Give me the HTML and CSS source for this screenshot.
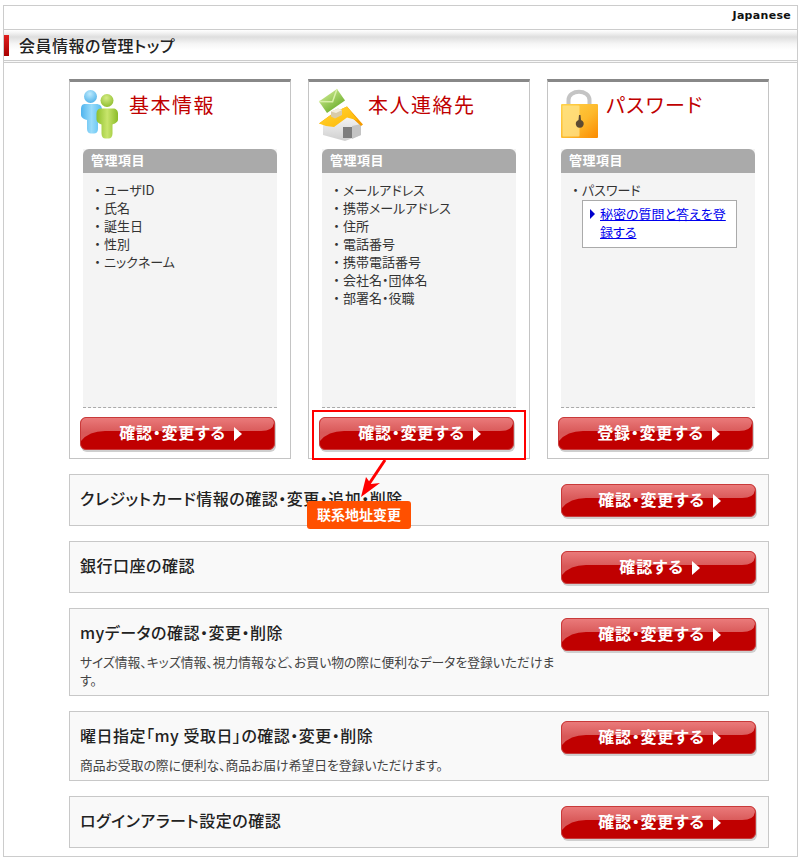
FILE: index.html
```html
<!DOCTYPE html>
<html lang="ja">
<head>
    <meta charset="UTF-8">
    <meta name="viewport" content="width=device-width, initial-scale=1.0">
    <title>会員情報の管理トップ</title>
    <link rel="stylesheet" href="styles.css">
</head>
<body>
<div class="page">
    <div class="lang-bar">Japanese</div>
    <h1 class="page-title">会員情報の管理トップ</h1>

    <div class="main">
        <div class="cards">
            <div class="card">
                <div class="card-head">
                    <svg class="card-icon" width="50" height="60" viewBox="0 0 50 60">
                        <defs>
                            <linearGradient id="blueBody" x1="0" y1="0" x2="1" y2="0">
                                <stop offset="0" stop-color="#4fb4ee"/>
                                <stop offset="0.5" stop-color="#9adcfa"/>
                                <stop offset="1" stop-color="#58bdf0"/>
                            </linearGradient>
                            <linearGradient id="greenBody" x1="0" y1="0" x2="1" y2="0">
                                <stop offset="0" stop-color="#8fc02c"/>
                                <stop offset="0.5" stop-color="#c8e56c"/>
                                <stop offset="1" stop-color="#8cbc28"/>
                            </linearGradient>
                            <radialGradient id="blueHead" cx="0.45" cy="0.3" r="0.8">
                                <stop offset="0" stop-color="#bdeafd"/>
                                <stop offset="1" stop-color="#45ade8"/>
                            </radialGradient>
                            <radialGradient id="greenHead" cx="0.45" cy="0.3" r="0.8">
                                <stop offset="0" stop-color="#d5ec84"/>
                                <stop offset="1" stop-color="#86b824"/>
                            </radialGradient>
                        </defs>
                        <circle cx="14.5" cy="11.5" r="6.5" fill="url(#blueHead)"/>
                        <path d="M9 19h11c4 0 6 2 6 6v8l-4 3v8c0 3-2 4.500-4 4.500h-3c-2 0-4-1.500-4-4.500v-9c-2-0.500-6-2-6-5v-5c0-4 1-6 4-6z" fill="url(#blueBody)"/>
                        <circle cx="31" cy="15.500" r="6.500" fill="url(#greenHead)"/>
                        <path d="M25 23.500h12c3 0 5 2 5 5v6c0 2.500-3 4-5.500 5v9c0 3-1.500 5-4 5h-3c-2.500 0-4-2-4-5v-9c-2.500-1-5-2.500-5-5v-6c0-3 1.500-5 4.500-5z" fill="url(#greenBody)"/>
                    </svg>
                    <h2 class="card-title">基本情報</h2>
                </div>
                <div class="panel">
                    <div class="panel-head">管理項目</div>
                    <ul class="panel-list">
                        <li>ユーザID</li>
                        <li>氏名</li>
                        <li>誕生日</li>
                        <li>性別</li>
                        <li>ニックネーム</li>
                    </ul>
                </div>
                <a class="btn btn-card" href="#">確認・変更する</a>
            </div>

            <div class="card">
                <div class="card-head">
                    <svg class="card-icon" width="50" height="60" viewBox="0 0 50 60">
                        <defs>
                            <linearGradient id="roof" x1="0" y1="0" x2="1" y2="1">
                                <stop offset="0" stop-color="#ffd83a"/>
                                <stop offset="1" stop-color="#ffb400"/>
                            </linearGradient>
                            <linearGradient id="mail" x1="0" y1="0" x2="0" y2="1">
                                <stop offset="0" stop-color="#b6dc78"/>
                                <stop offset="1" stop-color="#7cb83c"/>
                            </linearGradient>
                            <linearGradient id="wall" x1="0" y1="0" x2="0" y2="1">
                                <stop offset="0" stop-color="#ffffff"/>
                                <stop offset="1" stop-color="#cfcfcf"/>
                            </linearGradient>
                        </defs>
                        <path d="M8 37l24-12 14 14v11l-16 6-22-6z" fill="url(#wall)"/>
                        <path d="M37 41l9-2v11l-9 4z" fill="#c4c4c4"/>
                        <path d="M28 42h9v11h-9z" fill="#7d7d7d"/>
                        <path d="M4 38.500l15-11 13-6 16 18-2 1.500-14-13-17 12.500z" fill="#f49a00"/>
                        <path d="M4 38.500l15-11 13-6 11 14-11-3-13 9.500-8-1z" fill="url(#roof)"/>
                        <path d="M16 26.500l7-3 4 1.500v5l-7 3.500-4-2z" fill="#d8cba8"/>
                        <path d="M16 26.500l7-3 4 1.500-6 3z" fill="#f4eedc"/>
                        <g transform="rotate(-35 17 16)">
                            <rect x="6" y="9" width="22" height="14" fill="url(#mail)"/>
                            <path d="M6 9l11 8 11-8" fill="none" stroke="#d9f0a8" stroke-width="1.500"/>
                        </g>
                    </svg>
                    <h2 class="card-title">本人連絡先</h2>
                </div>
                <div class="panel">
                    <div class="panel-head">管理項目</div>
                    <ul class="panel-list">
                        <li>メールアドレス</li>
                        <li>携帯メールアドレス</li>
                        <li>住所</li>
                        <li>電話番号</li>
                        <li>携帯電話番号</li>
                        <li>会社名・団体名</li>
                        <li>部署名・役職</li>
                    </ul>
                </div>
                <a class="btn btn-card" href="#">確認・変更する</a>
            </div>

            <div class="card">
                <div class="card-head card-head-wide">
                    <svg class="card-icon" width="50" height="60" viewBox="0 0 50 60">
                        <defs>
                            <linearGradient id="lockBody" x1="0" y1="0" x2="1" y2="1">
                                <stop offset="0" stop-color="#ffd24a"/>
                                <stop offset="0.55" stop-color="#fdb92c"/>
                                <stop offset="1" stop-color="#fb8a00"/>
                            </linearGradient>
                        </defs>
                        <path d="M12.500 22v-7c0-11 21-11 21 0v7" fill="none" stroke="#c4c4c4" stroke-width="4"/>
                        <rect x="5" y="19" width="37" height="34" rx="1" fill="url(#lockBody)"/>
                        <rect x="6.500" y="20.500" width="17" height="31" rx="1" fill="#ffe48c" opacity="0.75"/>
                        <path d="M23 30h1.500l0.500 5a4 4 0 1 1-2.500 0z" fill="#5c4a32"/>
                    </svg>
                    <h2 class="card-title">パスワード</h2>
                </div>
                <div class="panel">
                    <div class="panel-head">管理項目</div>
                    <ul class="panel-list">
                        <li>パスワード</li>
                    </ul>
                    <div class="panel-link">
                        <a href="#">秘密の質問と答えを登録する</a>
                    </div>
                </div>
                <a class="btn btn-card" href="#">登録・変更する</a>
            </div>
        </div>

        <div class="row">
            <div class="row-text">
                <h3>クレジットカード情報の確認・変更・追加・削除</h3>
            </div>
            <a class="btn" href="#">確認・変更する</a>
        </div>
        <div class="row">
            <div class="row-text">
                <h3>銀行口座の確認</h3>
            </div>
            <a class="btn" href="#">確認する</a>
        </div>
        <div class="row">
            <div class="row-text">
                <h3>myデータの確認・変更・削除</h3>
                <p>サイズ情報、キッズ情報、視力情報など、お買い物の際に便利なデータを登録いただけます。</p>
            </div>
            <a class="btn" href="#">確認・変更する</a>
        </div>
        <div class="row">
            <div class="row-text">
                <h3>曜日指定「my 受取日」の確認・変更・削除</h3>
                <p>商品お受取の際に便利な、商品お届け希望日を登録いただけます。</p>
            </div>
            <a class="btn" href="#">確認・変更する</a>
        </div>
        <div class="row">
            <div class="row-text">
                <h3>ログインアラート設定の確認</h3>
            </div>
            <a class="btn" href="#">確認・変更する</a>
        </div>
    </div>

    <!-- annotation drawn over the page -->
    <div class="note-box"></div>
    <svg class="note-arrow" width="30" height="40" viewBox="0 0 30 40">
        <path d="M27 1L11 25" stroke="#f00" stroke-width="3" fill="none"/>
        <path d="M3 38L8 18L13 25L22 24z" fill="#f00"/>
    </svg>
    <div class="note-tag">联系地址变更</div>
</div>
</body>
</html>
```

FILE: styles.css
```css
/* Global styles */
body {
    margin: 0;
    padding: 5px 0 0 3px;
    background-color: #ffffff;
    color: #333333;
    font-family: "Noto Sans CJK JP", "Liberation Sans", sans-serif;
    font-feature-settings: "palt";
}

.page {
    position: relative;
    box-sizing: border-box;
    width: 795px;
    height: 852px;
    border: 1px solid #cccccc;
}

/* Top bars */
.lang-bar {
    box-sizing: border-box;
    height: 24px;
    padding: 3px 6px 0 0;
    border-bottom: 1px solid #cccccc;
    color: #111111;
    font-family: "DejaVu Sans", sans-serif;
    font-size: 11px;
    font-weight: bold;
    letter-spacing: 0.3px;
    line-height: 14px;
    text-align: right;
}

.page-title {
    position: relative;
    box-sizing: border-box;
    height: 33px;
    margin: 0;
    padding-left: 15px;
    border-bottom: 3px double #cccccc;
    background: linear-gradient(#ffffff 0, #f2f2f2 3px, #dedede 7px, #f6f6f6 14px, #ffffff 20px);
    color: #222222;
    font-size: 16px;
    font-weight: 500;
    letter-spacing: 0.5px;
    line-height: 31px;
}

.page-title::before {
    content: "";
    position: absolute;
    left: 0;
    top: 5px;
    width: 5px;
    height: 21px;
    background: linear-gradient(#e02020, #a80000);
}

/* Main area */
.main {
    padding: 16px 0 0 65px;
    width: 700px;
    display: flex;
    flex-direction: column;
    gap: 15px;
}

.cards {
    display: flex;
    gap: 17px;
}

.card {
    box-sizing: border-box;
    width: 222px;
    height: 380px;
    border: 1px solid #c4c4c4;
    border-top: 3px solid #888888;
    display: flex;
    flex-direction: column;
}

.card-head {
    display: flex;
    height: 67px;
    padding: 3px 0 0 6px;
    box-sizing: border-box;
}

.card-head-wide {
    padding-left: 8px;
}

.card-title {
    margin: 0 0 0 3px;
    color: #c00000;
    font-size: 20px;
    font-weight: 400;
    letter-spacing: 1.5px;
    line-height: 40px;
}

.card-head-wide .card-title {
    margin-left: 0;
}

.panel {
    width: 194px;
    height: 258px;
    margin-left: 13px;
    background-color: #f4f4f4;
    border-bottom: 1px dashed #aaaaaa;
}

.panel-head {
    height: 24px;
    padding-left: 8px;
    border-radius: 6px 6px 0 0;
    background-color: #aaaaaa;
    color: #ffffff;
    font-size: 13px;
    font-weight: 700;
    letter-spacing: 0.5px;
    line-height: 22px;
}

.panel-list {
    margin: 0;
    padding: 8px 0 0 8px;
    list-style: none;
    font-size: 13px;
    line-height: 18px;
}

.panel-list li::before {
    content: "・";
    display: inline-block;
    width: 13px;
    text-align: center;
    font-feature-settings: normal;
}

.panel-link {
    position: relative;
    box-sizing: border-box;
    width: 155px;
    margin: 1px 0 0 21px;
    padding: 4px 6px 6px 17px;
    border: 1px solid #aaaaaa;
    background-color: #ffffff;
    font-size: 13px;
    line-height: 18px;
}

.panel-link::before {
    content: "";
    position: absolute;
    left: 7px;
    top: 8px;
    border-left: 5px solid #0000cc;
    border-top: 5px solid transparent;
    border-bottom: 5px solid transparent;
}

.panel-link a {
    color: #0000ee;
}

/* Red buttons */
.btn {
    position: relative;
    box-sizing: border-box;
    flex: none;
    display: flex;
    align-items: center;
    justify-content: center;
    gap: 8px;
    width: 195px;
    height: 33px;
    padding: 0 0 3px 2px;
    border: 1px solid #c83a3a;
    border-radius: 6px;
    background-color: #c00000;
    box-shadow: 1px 2px 0 #cfcfcf;
    overflow: hidden;
    color: #ffffff;
    font-size: 16px;
    font-weight: 700;
    letter-spacing: 0.8px;
    text-decoration: none;
    z-index: 0;
}

.btn::before {
    content: "";
    position: absolute;
    z-index: -1;
    left: 0;
    top: 0;
    width: 193px;
    height: 24px;
    background: linear-gradient(#ea7a7a, #d85858 60%);
    clip-path: path("M0 0H193V5Q192 13 180 13H24Q8 13 0 23Z");
}

.btn::after {
    content: "";
    margin-top: 3px;
    border-left: 8px solid #ffffff;
    border-top: 7px solid transparent;
    border-bottom: 7px solid transparent;
}

.btn-card {
    margin: 9px 0 0 10px;
    padding-left: 6px;
}

/* Rows under the cards */
.row {
    box-sizing: border-box;
    display: flex;
    align-items: flex-start;
    justify-content: space-between;
    width: 700px;
    min-height: 52px;
    padding: 9px 12px 6px 10px;
    border: 1px solid #c8c8c8;
    background-color: #f9f9f9;
}

.row-text {
    width: 482px;
    padding-top: 5px;
}

.row-text h3 {
    margin: 0;
    color: #222222;
    font-size: 16px;
    font-weight: 500;
    letter-spacing: 0.5px;
    line-height: 18px;
}

.row-text p {
    margin: 12px 0 0;
    color: #444444;
    font-size: 12.8px;
    line-height: 18px;
}

/* Annotation over the page */
.note-box {
    position: absolute;
    left: 308px;
    top: 404px;
    width: 210px;
    height: 46px;
    border: 2px solid #ff0000;
}

.note-arrow {
    position: absolute;
    left: 354px;
    top: 453px;
}

.note-tag {
    position: absolute;
    left: 303px;
    top: 495px;
    width: 104px;
    height: 28px;
    border-radius: 3px;
    background-color: #ff5000;
    color: #ffffff;
    font-family: "Noto Sans CJK SC", sans-serif;
    font-size: 14px;
    font-weight: 700;
    line-height: 27px;
    text-align: center;
}
```
